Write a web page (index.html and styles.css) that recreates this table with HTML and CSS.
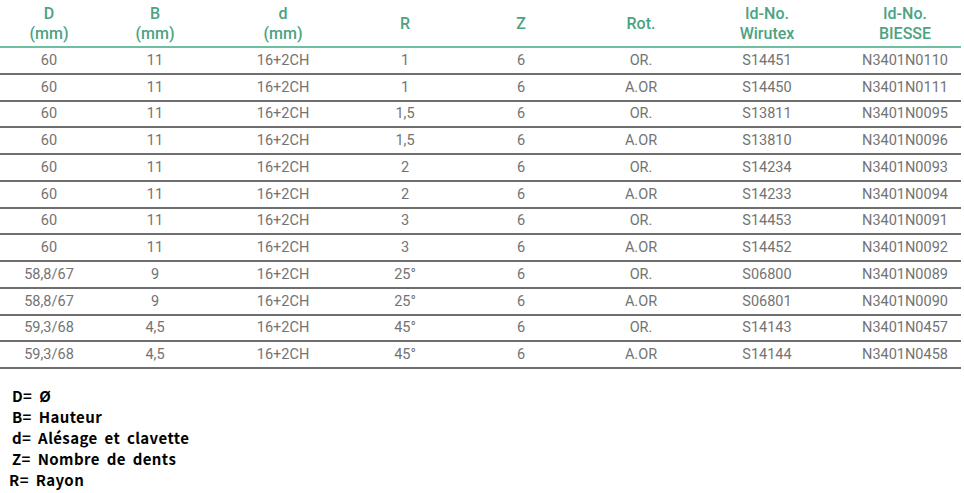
FILE: index.html
```html
<!DOCTYPE html>
<html lang="fr">
<head>
<meta charset="utf-8">
<link rel="stylesheet" href="styles.css">
</head>
<body>
<div class="table">
  <div class="row head">
    <div class="c c1">D<br>(mm)</div>
    <div class="c c2">B<br>(mm)</div>
    <div class="c c3">d<br>(mm)</div>
    <div class="c c4">R</div>
    <div class="c c5">Z</div>
    <div class="c c6">Rot.</div>
    <div class="c c7">Id-No.<br>Wirutex</div>
    <div class="c c8">Id-No.<br>BIESSE</div>
  </div>
  <div class="row"><div class="c c1">60</div><div class="c c2">11</div><div class="c c3">16+2CH</div><div class="c c4">1</div><div class="c c5">6</div><div class="c c6">OR.</div><div class="c c7">S14451</div><div class="c c8">N3401N0110</div></div>
  <div class="row"><div class="c c1">60</div><div class="c c2">11</div><div class="c c3">16+2CH</div><div class="c c4">1</div><div class="c c5">6</div><div class="c c6">A.OR</div><div class="c c7">S14450</div><div class="c c8">N3401N0111</div></div>
  <div class="row"><div class="c c1">60</div><div class="c c2">11</div><div class="c c3">16+2CH</div><div class="c c4">1,5</div><div class="c c5">6</div><div class="c c6">OR.</div><div class="c c7">S13811</div><div class="c c8">N3401N0095</div></div>
  <div class="row"><div class="c c1">60</div><div class="c c2">11</div><div class="c c3">16+2CH</div><div class="c c4">1,5</div><div class="c c5">6</div><div class="c c6">A.OR</div><div class="c c7">S13810</div><div class="c c8">N3401N0096</div></div>
  <div class="row"><div class="c c1">60</div><div class="c c2">11</div><div class="c c3">16+2CH</div><div class="c c4">2</div><div class="c c5">6</div><div class="c c6">OR.</div><div class="c c7">S14234</div><div class="c c8">N3401N0093</div></div>
  <div class="row"><div class="c c1">60</div><div class="c c2">11</div><div class="c c3">16+2CH</div><div class="c c4">2</div><div class="c c5">6</div><div class="c c6">A.OR</div><div class="c c7">S14233</div><div class="c c8">N3401N0094</div></div>
  <div class="row"><div class="c c1">60</div><div class="c c2">11</div><div class="c c3">16+2CH</div><div class="c c4">3</div><div class="c c5">6</div><div class="c c6">OR.</div><div class="c c7">S14453</div><div class="c c8">N3401N0091</div></div>
  <div class="row"><div class="c c1">60</div><div class="c c2">11</div><div class="c c3">16+2CH</div><div class="c c4">3</div><div class="c c5">6</div><div class="c c6">A.OR</div><div class="c c7">S14452</div><div class="c c8">N3401N0092</div></div>
  <div class="row"><div class="c c1">58,8/67</div><div class="c c2">9</div><div class="c c3">16+2CH</div><div class="c c4">25°</div><div class="c c5">6</div><div class="c c6">OR.</div><div class="c c7">S06800</div><div class="c c8">N3401N0089</div></div>
  <div class="row"><div class="c c1">58,8/67</div><div class="c c2">9</div><div class="c c3">16+2CH</div><div class="c c4">25°</div><div class="c c5">6</div><div class="c c6">A.OR</div><div class="c c7">S06801</div><div class="c c8">N3401N0090</div></div>
  <div class="row"><div class="c c1">59,3/68</div><div class="c c2">4,5</div><div class="c c3">16+2CH</div><div class="c c4">45°</div><div class="c c5">6</div><div class="c c6">OR.</div><div class="c c7">S14143</div><div class="c c8">N3401N0457</div></div>
  <div class="row"><div class="c c1">59,3/68</div><div class="c c2">4,5</div><div class="c c3">16+2CH</div><div class="c c4">45°</div><div class="c c5">6</div><div class="c c6">A.OR</div><div class="c c7">S14144</div><div class="c c8">N3401N0458</div></div>
</div>
<div class="legend">
  <div class="lg">D= Ø</div>
  <div class="lg">B= Hauteur</div>
  <div class="lg">d= Alésage et clavette</div>
  <div class="lg">Z= Nombre de dents</div>
  <div class="lg r">R= Rayon</div>
</div>
</body>
</html>
```
FILE: styles.css
```css
html, body {
  margin: 0;
  padding: 0;
  background: #fff;
}
.table {
  width: 961px;
  font-family: Roboto, "Liberation Sans", sans-serif;
  font-size: 14.5px;
  color: #737373;
}
.row {
  display: grid;
  grid-template-columns: 98px 114px 142px 102px 130px 110px 142px 123px;
  align-items: center;
  height: 24.75px;
  border-bottom: 2px solid #6e6e6e;
}
.row.head {
  height: 46px;
  border-bottom: 2px solid #6dbf9f;
  color: #4aa383;
  font-weight: 500;
  font-size: 16px;
  line-height: 20px;
  padding-top: 1px;
  box-sizing: border-box;
  height: 48px;
}
.c {
  text-align: center;
}
.c8 {
  padding-left: 11px;
}
.legend {
  margin-top: 16px;
  font-family: "Noto Sans CJK KR", "Noto Sans", sans-serif;
  font-weight: 700;
  font-size: 15px;
  letter-spacing: 0.4px;
  word-spacing: 3px;
  line-height: 21px;
  color: #000;
  padding-left: 12px;
}
.lg.r {
  margin-left: -3px;
}
```
